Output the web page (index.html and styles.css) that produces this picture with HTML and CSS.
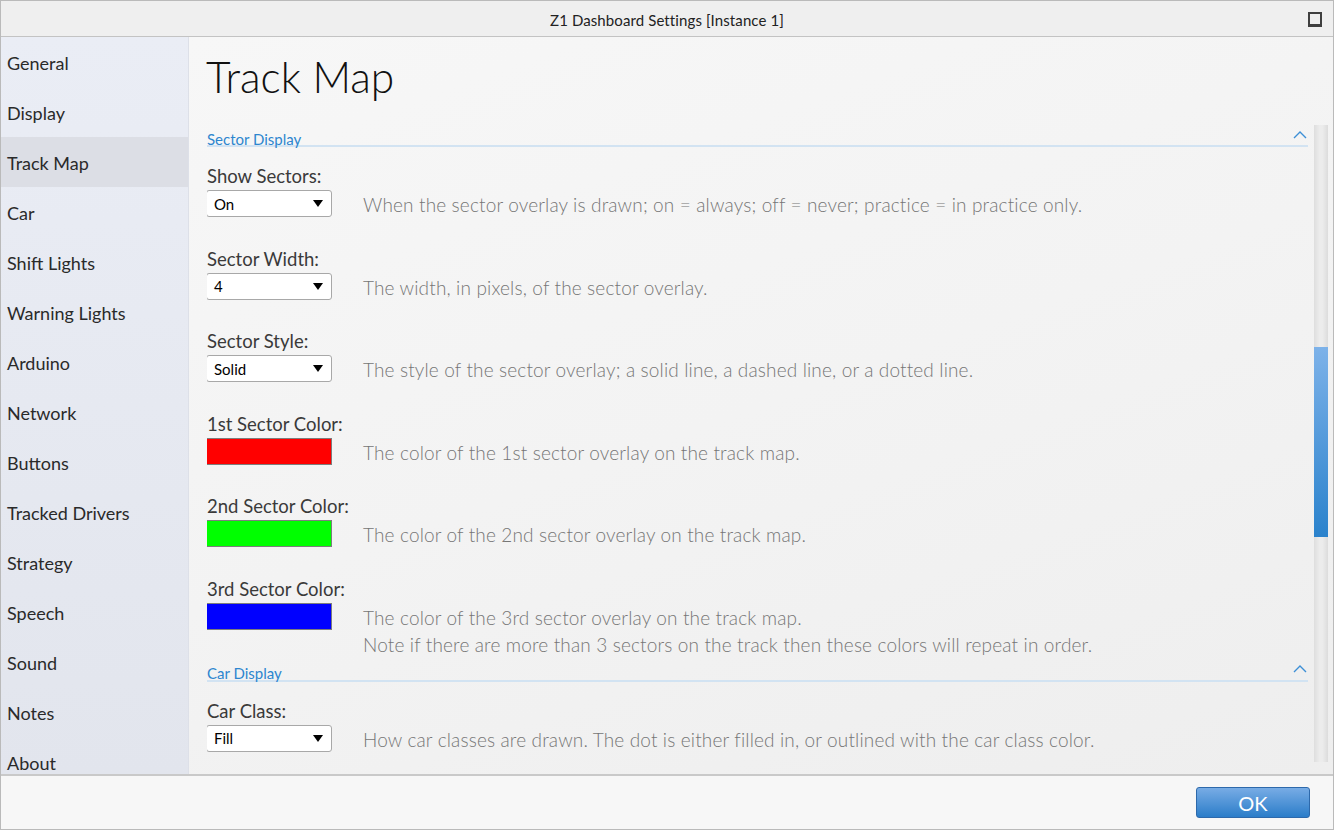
FILE: index.html
```html
<!DOCTYPE html>
<html lang="en">
<head>
    <meta charset="UTF-8">
    <title>Z1 Dashboard Settings</title>
    <link rel="stylesheet" href="styles.css">
</head>
<body>
    <div class="window">
        <div class="titlebar">
            <span></span>
            <span class="title">Z1 Dashboard Settings [Instance 1]</span>
            <span class="max-btn"></span>
        </div>

        <div class="main">
            <nav class="sidebar">
                <div class="nav-item">General</div>
                <div class="nav-item">Display</div>
                <div class="nav-item active">Track Map</div>
                <div class="nav-item">Car</div>
                <div class="nav-item">Shift Lights</div>
                <div class="nav-item">Warning Lights</div>
                <div class="nav-item">Arduino</div>
                <div class="nav-item">Network</div>
                <div class="nav-item">Buttons</div>
                <div class="nav-item">Tracked Drivers</div>
                <div class="nav-item">Strategy</div>
                <div class="nav-item">Speech</div>
                <div class="nav-item">Sound</div>
                <div class="nav-item">Notes</div>
                <div class="nav-item">About</div>
            </nav>

            <div class="content">
                <h1 class="page-title">Track Map</h1>
                <div class="scroller">
                    <div class="scroll-body">
                        <section class="group">
                            <div class="group-header">
                                <span>Sector Display</span>
                                <svg class="chevron" width="14" height="9" viewBox="0 0 14 9"><polyline points="1,8 7,2 13,8" fill="none" stroke="#3d8fd6" stroke-width="1.4"/></svg>
                            </div>

                            <div class="setting">
                                <div class="setting-label">Show Sectors:</div>
                                <div class="setting-row">
                                    <div class="dropdown"><span>On</span><span class="arrow"></span></div>
                                    <div class="setting-desc">When the sector overlay is drawn; on = always; off = never; practice = in practice only.</div>
                                </div>
                            </div>

                            <div class="setting">
                                <div class="setting-label">Sector Width:</div>
                                <div class="setting-row">
                                    <div class="dropdown"><span>4</span><span class="arrow"></span></div>
                                    <div class="setting-desc">The width, in pixels, of the sector overlay.</div>
                                </div>
                            </div>

                            <div class="setting">
                                <div class="setting-label">Sector Style:</div>
                                <div class="setting-row">
                                    <div class="dropdown"><span>Solid</span><span class="arrow"></span></div>
                                    <div class="setting-desc">The style of the sector overlay; a solid line, a dashed line, or a dotted line.</div>
                                </div>
                            </div>

                            <div class="setting">
                                <div class="setting-label">1st Sector Color:</div>
                                <div class="setting-row">
                                    <div class="swatch red"></div>
                                    <div class="setting-desc">The color of the 1st sector overlay on the track map.</div>
                                </div>
                            </div>

                            <div class="setting">
                                <div class="setting-label">2nd Sector Color:</div>
                                <div class="setting-row">
                                    <div class="swatch green"></div>
                                    <div class="setting-desc">The color of the 2nd sector overlay on the track map.</div>
                                </div>
                            </div>

                            <div class="setting">
                                <div class="setting-label">3rd Sector Color:</div>
                                <div class="setting-row">
                                    <div class="swatch blue"></div>
                                    <div class="setting-desc">The color of the 3rd sector overlay on the track map.<br>Note if there are more than 3 sectors on the track then these colors will repeat in order.</div>
                                </div>
                            </div>
                        </section>

                        <section class="group">
                            <div class="group-header">
                                <span>Car Display</span>
                                <svg class="chevron" width="14" height="9" viewBox="0 0 14 9"><polyline points="1,8 7,2 13,8" fill="none" stroke="#3d8fd6" stroke-width="1.4"/></svg>
                            </div>

                            <div class="setting">
                                <div class="setting-label">Car Class:</div>
                                <div class="setting-row">
                                    <div class="dropdown"><span>Fill</span><span class="arrow"></span></div>
                                    <div class="setting-desc">How car classes are drawn. The dot is either filled in, or outlined with the car class color.</div>
                                </div>
                            </div>
                        </section>
                    </div>
                    <div class="scrollbar"><div class="thumb"></div></div>
                </div>
            </div>
        </div>

        <div class="footer">
            <button class="ok-button">OK</button>
        </div>
    </div>
</body>
</html>
```

FILE: styles.css
```css
body {
    margin: 0;
    font-family: 'Lato', 'Noto Sans', sans-serif;
    overflow: hidden;
}

.window {
    width: 1334px;
    height: 830px;
    box-sizing: border-box;
    border: 1px solid #bababa;
    display: flex;
    flex-direction: column;
    background-color: #f4f4f4;
}

.titlebar {
    height: 35px;
    flex-shrink: 0;
    display: grid;
    grid-template-columns: 1fr auto 1fr;
    align-items: center;
    background-color: #efefef;
    border-bottom: 1px solid #c3c3c3;
}

.title {
    font-size: 15px;
    letter-spacing: 0.1px;
    color: #222;
    padding-top: 2px;
}

.max-btn {
    justify-self: end;
    width: 10px;
    height: 10px;
    border: 2px solid #3f3f3f;
    border-bottom-width: 3px;
    margin-right: 11px;
    margin-top: 1px;
}

.main {
    flex: 1;
    display: flex;
    min-height: 0;
}

.sidebar {
    width: 187px;
    flex-shrink: 0;
    border-right: 1px solid #dde0e8;
    background: linear-gradient(180deg, #eaedf5, #e2e5ed);
    overflow: hidden;
}

.nav-item {
    height: 50px;
    line-height: 52px;
    padding-left: 6px;
    font-size: 18px;
    color: #2a2a2a;
}

.nav-item.active {
    background-color: #dcdee5;
}

.content {
    flex: 1;
    min-width: 0;
    display: flex;
    flex-direction: column;
    padding: 0 5px 0 18px;
    background: linear-gradient(160deg, #f7f7f7, #f3f3f3 50%, #eeeeee);
}

.page-title {
    margin: 13px 0 0 -1px;
    font-size: 42.5px;
    line-height: 54px;
    font-weight: 300;
    color: #111;
    height: 75px;
}

.scroller {
    flex: 1;
    min-height: 0;
    display: flex;
}

.scroll-body {
    flex: 1;
    min-width: 0;
    overflow: hidden;
    padding-top: 4px;
}

.scrollbar {
    width: 14px;
    margin: 0 0 12px 6px;
    background: linear-gradient(90deg, #dedede, #ececec 40%, #ececec 60%, #dcdcdc);
    position: relative;
}

.thumb {
    position: absolute;
    left: 0;
    right: 0;
    top: 222px;
    height: 190px;
    background: linear-gradient(180deg, #7db2e9, #2a82cc);
}

.group-header {
    display: flex;
    justify-content: space-between;
    align-items: center;
    height: 16px;
    font-size: 15px;
    line-height: 16px;
    color: #2d86cf;
    border-bottom: 2px solid #d2e3f2;
}

.group-header span {
    padding-top: 3px;
}

.chevron {
    margin-right: 1px;
    margin-top: -6px;
}

.group .setting {
    margin-top: 17px;
    margin-bottom: 29.6px;
}

.group .setting + .setting {
    margin-top: 0;
}

.group .setting:last-child {
    margin-bottom: 7px;
}

.setting-label {
    font-size: 18.5px;
    line-height: 24px;
    color: #3a3a3a;
    margin-bottom: 2px;
}

.setting-row {
    display: flex;
    align-items: flex-start;
    gap: 31px;
    margin-left: -1px;
}

.dropdown {
    width: 124px;
    height: 25px;
    flex-shrink: 0;
    box-sizing: content-box;
    background-color: #fff;
    border: 1px solid #a8a8a8;
    border-radius: 3px;
    display: flex;
    justify-content: space-between;
    align-items: center;
    padding: 0;
    font-size: 15px;
    color: #000;
}

.dropdown span:first-child {
    padding-left: 7px;
}

.arrow {
    width: 0;
    height: 0;
    border-left: 5px solid transparent;
    border-right: 5px solid transparent;
    border-top: 7px solid #000;
    margin-right: 8px;
}

.swatch {
    width: 124px;
    height: 25px;
    flex-shrink: 0;
    border: 1px solid #7d7d7d;
}

.swatch.red {
    background-color: #ff0000;
}

.swatch.green {
    background-color: #00ff00;
}

.swatch.blue {
    background-color: #0000ff;
}

.setting-desc {
    font-size: 19px;
    letter-spacing: 0.15px;
    line-height: 27px;
    padding-top: 1px;
    margin-bottom: -1px;
    color: #767676;
    font-weight: 300;
}

.footer {
    height: 53px;
    flex-shrink: 0;
    border-top: 2px solid #c9c9c9;
    background-color: #f7f7f7;
    display: flex;
    justify-content: flex-end;
    align-items: center;
    padding: 0 23px;
}

.ok-button {
    width: 114px;
    height: 31px;
    border: 1px solid #2d69ab;
    border-radius: 3px;
    background: linear-gradient(180deg, #78ace5, #2b7dc9);
    color: #fff;
    font-family: 'Lato', 'Noto Sans', sans-serif;
    font-size: 20px;
    padding: 0;
}
```
